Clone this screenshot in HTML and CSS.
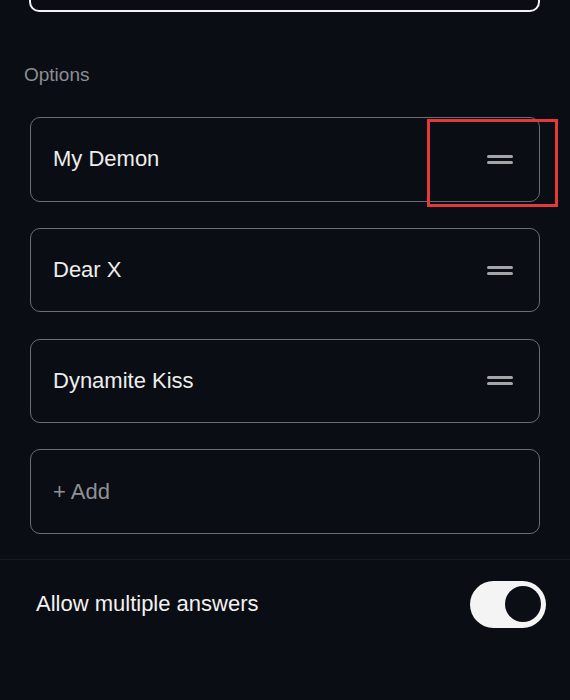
FILE: index.html
```html
<!DOCTYPE html>
<html>
<head>
<meta charset="utf-8">
<link rel="stylesheet" href="styles.css">
</head>
<body>
<div class="screen">
  <div class="top-box"></div>
  <div class="section">
    <div class="label">Options</div>
    <div class="options">
      <div class="option">
        <span class="option-text">My Demon</span>
        <span class="handle"><i></i><i></i></span>
        <div class="highlight"></div>
      </div>
      <div class="option">
        <span class="option-text">Dear X</span>
        <span class="handle"><i></i><i></i></span>
      </div>
      <div class="option">
        <span class="option-text">Dynamite Kiss</span>
        <span class="handle"><i></i><i></i></span>
      </div>
      <div class="option add">
        <span class="option-text">+ Add</span>
      </div>
    </div>
  </div>
  <div class="setting">
    <span class="setting-text">Allow multiple answers</span>
    <span class="toggle"><span class="knob"></span></span>
  </div>
</div>
</body>
</html>
```
FILE: styles.css
```css
html, body {
  margin: 0;
  padding: 0;
  background: #0a0d13;
}
body {
  font-family: "Liberation Sans", Arial, sans-serif;
  color: #ececec;
}
.screen {
  width: 570px;
  height: 700px;
  overflow: hidden;
  position: relative;
}
.top-box {
  margin: -40px 0 0 29px;
  width: 507px;
  height: 48px;
  border: 2.5px solid #f2f2f2;
  border-radius: 10px;
}
.section {
  padding: 52px 30px 25px 30px;
  border-bottom: 1px solid #161a21;
}
.label {
  margin-left: -6px;
  font-size: 19px;
  color: #8b8e94;
  line-height: 22px;
}
.options {
  margin-top: 31px;
  display: flex;
  flex-direction: column;
  gap: 26.3px;
}
.option {
  position: relative;
  height: 82.5px;
  border: 1.5px solid #6a6d73;
  border-radius: 10px;
  display: flex;
  align-items: center;
  justify-content: space-between;
  padding: 0 26px 0 22px;
}
.option-text {
  font-size: 22px;
  color: #ededed;
}
.add .option-text {
  color: #8f9196;
}
.handle {
  display: flex;
  flex-direction: column;
  gap: 3px;
  width: 26px;
}
.handle i {
  display: block;
  height: 3px;
  border-radius: 1.5px;
  background: #a3a5a9;
}
.highlight {
  position: absolute;
  left: 396px;
  top: 1px;
  width: 125px;
  height: 82px;
  border: 3px solid #e5383b;
}
.setting {
  display: flex;
  align-items: center;
  justify-content: space-between;
  padding: 21px 24px 0 36px;
}
.setting-text {
  font-size: 22px;
  color: #f2f2f2;
}
.toggle {
  width: 76px;
  height: 47px;
  border-radius: 24px;
  background: #f4f4f4;
  display: flex;
  align-items: center;
  justify-content: flex-end;
  padding-right: 5px;
  box-sizing: border-box;
}
.knob {
  width: 36px;
  height: 36px;
  border-radius: 50%;
  background: #0b0e14;
}
```
